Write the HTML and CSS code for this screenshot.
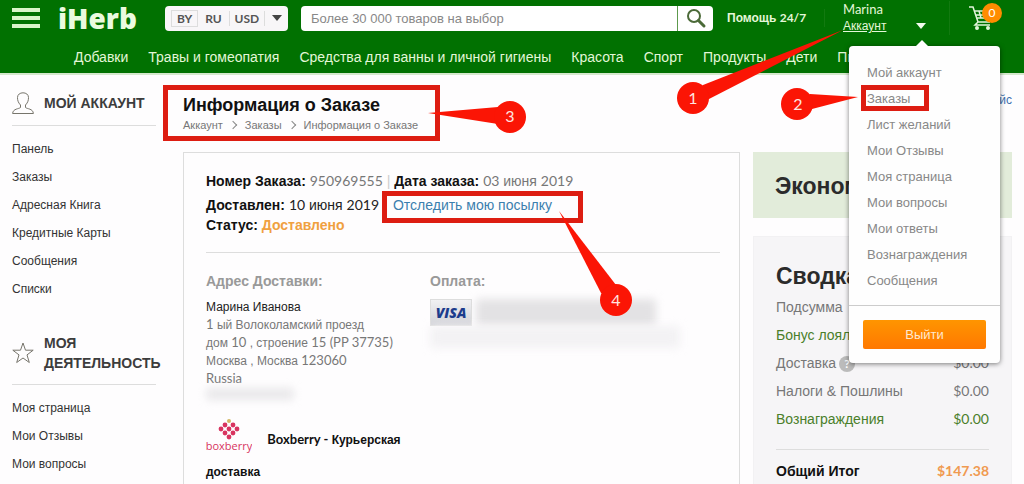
FILE: index.html
```html
<!DOCTYPE html>
<html lang="ru">
<head>
    <meta charset="UTF-8">
    <meta name="viewport" content="width=device-width, initial-scale=1.0">
    <title>Информация о Заказе</title>
    <link rel="stylesheet" href="styles.css">
</head>
<body>

    <header class="header">
        <div class="topbar">
            <button class="burger" aria-label="Меню"><span></span><span></span><span></span></button>
            <a class="logo" href="#">iHerb</a>
            <button class="locale">
                <span class="country">BY</span>
                <span class="lang">RU</span>
                <span class="currency">USD</span>
                <span class="caret"></span>
            </button>
            <form class="search">
                <input type="text" aria-label="Поиск" placeholder="Более 30 000 товаров на выбор">
                <button type="button" aria-label="Найти">
                    <svg width="22" height="22" viewBox="0 0 22 22" fill="none" stroke="#4b6a38">
                        <circle cx="9" cy="9" r="6" stroke-width="2"/>
                        <path d="M13.5 13.5L19 19" stroke-width="3" stroke-linecap="round"/>
                    </svg>
                </button>
            </form>
            <a class="help" href="#">Помощь <span class="lat">24/7</span></a>
            <div class="account">
                <div class="account-name">
                    <span class="lat">Marina</span>
                    <a href="#">Аккаунт</a>
                </div>
                <span class="caret light"></span>
            </div>
            <a class="cart" href="#" aria-label="Корзина">
                <svg width="24" height="26" viewBox="0 0 24 26" fill="none" stroke="#e4f5dc" stroke-width="2">
                    <path d="M0 2h4l5 15h12M5 6h16l-3 7H8M10 6l2 7M15 6v7M6 10h13M9 17l-3 3h15" stroke-width="1.5"/>
                    <circle cx="8" cy="23" r="1"/>
                    <circle cx="19" cy="23" r="1"/>
                </svg>
                <span class="badge">0</span>
            </a>
        </div>
        <nav class="nav">
            <a href="#">Добавки</a>
            <a href="#">Травы и гомеопатия</a>
            <a href="#">Средства для ванны и личной гигиены</a>
            <a href="#">Красота</a>
            <a href="#">Спорт</a>
            <a href="#">Продукты</a>
            <a href="#">Дети</a>
            <a href="#">Питомцы</a>
        </nav>
    </header>

    <div class="page">
        <aside class="sidebar">
            <h2>
                <svg width="22" height="22" viewBox="0 0 22 22" fill="none" stroke="#77756c">
                    <path d="M8.500 13C6 10.500 5.500 8 5.500 5.500C5.500 2.500 8 .8 11 .8s5.500 1.700 5.500 4.700c0 2.500-.5 5-3 7.500v2.500c1.500 1.500 7.500 1 7.900 6H.6c.4-5 6.400-4.500 7.900-6z"/>
                </svg>
                <span>МОЙ АККАУНТ</span>
            </h2>
            <ul>
                <li><a href="#">Панель</a></li>
                <li><a href="#">Заказы</a></li>
                <li><a href="#">Адресная Книга</a></li>
                <li><a href="#">Кредитные Карты</a></li>
                <li><a href="#">Сообщения</a></li>
                <li><a href="#">Списки</a></li>
            </ul>
            <h2>
                <svg width="22" height="22" viewBox="0 0 22 22" fill="none" stroke="#77756c">
                    <path d="M11 1l2.500 7.200h7.700l-6.200 4.700 2.300 7.600L11 16l-6.300 4.500L7 12.900.8 8.200h7.700z"/>
                </svg>
                <span>МОЯ ДЕЯТЕЛЬНОСТЬ</span>
            </h2>
            <ul>
                <li><a href="#">Моя страница</a></li>
                <li><a href="#">Мои Отзывы</a></li>
                <li><a href="#">Мои вопросы</a></li>
            </ul>
        </aside>

        <main class="content">
            <h1>Информация о Заказе</h1>
            <div class="crumbs">
                <a href="#">Аккаунт</a><i></i><a href="#">Заказы</a><i></i><span>Информация о Заказе</span>
            </div>

            <section class="order">
                <div class="order-head">
                    <p class="first"><b>Номер Заказа:</b> <span class="lat muted">950969555</span> <span class="bar">|</span> <b>Дата заказа:</b> <span class="muted"><span class="lat">03</span> июня <span class="lat">2019</span></span></p>
                    <p><b>Доставлен:</b> <span class="lat">10</span> июня <span class="lat">2019</span> <a class="track" href="#">Отследить мою посылку</a></p>
                    <p><b>Статус:</b> <b class="status">Доставлено</b></p>
                </div>
                <div class="details">
                    <div class="address">
                        <h3>Адрес Доставки:</h3>
                        <p>
                            <span class="name">Марина Иванова</span><br>
                            <span class="lat">1</span> ый Волоколамский проезд<br>
                            дом <span class="lat">10</span> , строение <span class="lat">15 (PP 37735)</span><br>
                            Москва , Москва <span class="lat">123060</span><br>
                            <span class="lat">Russia</span>
                        </p>
                        <div class="smudge phone"></div>
                    </div>
                    <div class="payment">
                        <h3>Оплата:</h3>
                        <div class="card-row">
                            <span class="visa">VISA</span>
                            <div class="smudge dark"></div>
                        </div>
                        <div class="smudge"></div>
                    </div>
                </div>
                <p class="shipping">
                    <svg class="boxberry" width="46" height="36" viewBox="0 0 46 36" fill="#d8345f">
                        <circle cx="23" cy="3" r="2" fill="#d3b765"/>
                        <circle cx="19" cy="7" r="2.400"/><circle cx="27" cy="7" r="2.400"/>
                        <circle cx="15" cy="11" r="2.400"/><circle cx="23" cy="11" r="2.400"/><circle cx="31" cy="11" r="2.400"/>
                        <circle cx="19" cy="15" r="2.400"/><circle cx="27" cy="15" r="2.400"/>
                        <circle cx="23" cy="19" r="2.400"/>
                        <text x="23" y="32" text-anchor="middle">boxberry</text>
                    </svg>
                    <span class="lat">Boxberry -</span> Курьерская доставка
                </p>
            </section>
        </main>

        <aside class="summary">
            <a class="price" href="#">Прайс</a>
            <div class="saving">Экономия</div>
            <div class="totals">
                <h2>Сводка заказа</h2>
                <table>
                    <tr><th>Подсумма</th><td></td></tr>
                    <tr class="green"><th>Бонус лояльности</th><td></td></tr>
                    <tr><th>Доставка<span class="hint">?</span></th><td>$0.00</td></tr>
                    <tr><th>Налоги &amp; Пошлины</th><td>$0.00</td></tr>
                    <tr class="green"><th>Вознаграждения</th><td>$0.00</td></tr>
                </table>
                <div class="grand"><span>Общий Итог</span><span class="sum">$147.38</span></div>
            </div>
        </aside>
    </div>

    <!-- Account drop-down -->
    <div class="menu">
        <ul>
            <li><a href="#">Мой аккаунт</a></li>
            <li><a href="#">Заказы</a></li>
            <li><a href="#">Лист желаний</a></li>
            <li><a href="#">Мои Отзывы</a></li>
            <li><a href="#">Моя страница</a></li>
            <li><a href="#">Мои вопросы</a></li>
            <li><a href="#">Мои ответы</a></li>
            <li><a href="#">Вознаграждения</a></li>
            <li><a href="#">Сообщения</a></li>
        </ul>
        <div class="menu-foot">
            <button>Выйти</button>
        </div>
    </div>

    <!-- Step marks drawn over the page -->
    <svg class="marks" width="1024" height="484" viewBox="0 0 1024 484">
        <g fill="none" stroke="#dd1d12" stroke-width="5">
            <rect x="165.500" y="87.500" width="272" height="51"/>
            <rect x="384.500" y="193.500" width="196" height="27"/>
            <rect x="863.500" y="87.500" width="63" height="21"/>
        </g>
        <g fill="#fb1505">
            <path d="M843 30L703 85 693 98 709 99z"/>
            <circle cx="693" cy="98" r="16"/>
            <path d="M858 97L810 94 797 104 812 109z"/>
            <circle cx="797" cy="104" r="16"/>
            <path d="M428 113L498 107 510 117 498 124z"/>
            <circle cx="510" cy="117" r="16"/>
            <path d="M559 211L601 293 616 300 616 285z"/>
            <circle cx="616" cy="300" r="16"/>
        </g>
        <g class="mark-num">
            <text x="693" y="104">1</text>
            <text x="798" y="110">2</text>
            <text x="510" y="122">3</text>
            <text x="616" y="306">4</text>
        </g>
    </svg>

</body>
</html>
```
FILE: styles.css
```css
* {
    box-sizing: border-box;
}
body {
    margin: 0;
    height: 100vh;
    overflow: hidden;
    position: relative;
    background: #fefdfe;
    color: #333;
    font: 13px/18px "Liberation Sans", Arial, sans-serif;
}
a {
    color: inherit;
    text-decoration: none;
}
button {
    border: none;
    padding: 0;
    cursor: pointer;
}
h1, h2, h3, p, ul {
    margin: 0;
    padding: 0;
}
ul {
    list-style: none;
}
.lat {
    font-family: Lato, sans-serif;
}
.muted {
    color: #777;
}

/* Header */
.header {
    background: #017101;
    border-bottom: 2px solid #d5e8cd;
    color: #e4f7d8;
}
.topbar {
    display: flex;
    align-items: center;
    height: 36px;
    padding: 0 12px;
}
.burger {
    display: flex;
    flex-direction: column;
    gap: 4px;
    width: 28px;
    background: none;
}
.burger span {
    height: 4px;
    background: #d9f5c9;
}
.logo {
    width: 84px;
    margin-left: 18px;
    font: 800 28px/34px "Open Sans", sans-serif;
    color: #eafbdf;
}
.locale {
    display: flex;
    align-items: center;
    justify-content: space-between;
    width: 123px;
    height: 25px;
    margin-left: 23px;
    padding: 0 6px;
    border-radius: 4px;
    background: #f8f6f8;
    color: #555;
    font: bold 12px/15px Lato, sans-serif;
}
.country {
    padding: 0 5px;
    border: 1px solid #ddd;
}
.currency {
    padding: 0 5px;
    border: solid #ddd;
    border-width: 0 1px;
}
.caret {
    border: 5px solid transparent;
    border-top: 6px solid #444;
    border-bottom: none;
}
.caret.light {
    border-top-color: #f2fbee;
}
.search {
    display: flex;
    flex: 1;
    height: 25px;
    margin-left: 13px;
}
.search input {
    flex: 1;
    min-width: 0;
    border: none;
    border-radius: 4px 0 0 4px;
    padding: 0 10px;
    background: #fff;
    font: 13px "Liberation Sans", Arial, sans-serif;
}
.search input::placeholder {
    color: #888;
}
.search button {
    display: flex;
    align-items: center;
    justify-content: center;
    width: 36px;
    border-left: 1px solid #5d9a4d;
    border-radius: 0 4px 4px 0;
    background: #fff;
}
.help {
    width: 98px;
    margin-left: 14px;
    border-right: 1px solid #127a10;
    font-weight: bold;
    font-size: 12px;
}
.account {
    display: flex;
    align-items: flex-end;
    justify-content: space-between;
    width: 125px;
    padding: 0 23px 0 18px;
    border-right: 1px solid #127a10;
    line-height: 17px;
}
.account-name {
    display: flex;
    flex-direction: column;
}
.account-name a {
    font-size: 12px;
    text-decoration: underline;
}
.account .caret {
    margin-bottom: 6px;
}
.cart {
    position: relative;
    width: 43px;
    height: 26px;
    margin-left: 19px;
}
.badge {
    position: absolute;
    top: -2px;
    left: 13px;
    width: 20px;
    height: 20px;
    border-radius: 50%;
    background: #ff8c00;
    color: #fff;
    font: 12px/20px Lato, sans-serif;
    text-align: center;
}
.nav {
    display: flex;
    gap: 20px;
    padding: 12px 0 7px 74px;
    overflow: hidden;
    white-space: nowrap;
    font-size: 14px;
}

/* Columns */
.page {
    display: grid;
    grid-template-columns: 144px 1fr 259px;
    padding: 0 12px;
}
.content {
    padding: 19px 13px 0 27px;
}

/* Left menu */
.sidebar {
    padding-top: 17px;
    font-size: 12px;
}
.sidebar h2 {
    display: flex;
    align-items: center;
    gap: 10px;
    padding-bottom: 11px;
    border-bottom: 1px solid #ddd;
    font-size: 14px;
    line-height: 20px;
    color: #3c3c3c;
}
.sidebar h2 svg {
    flex: none;
}
.sidebar ul {
    padding: 9px 0 30px;
}
.sidebar li {
    line-height: 28px;
}

/* Order */
h1 {
    font-size: 18px;
    line-height: 22px;
    color: #111;
}
.crumbs {
    display: flex;
    align-items: center;
    font-size: 11px;
    color: #777;
}
.crumbs i {
    width: 6px;
    height: 6px;
    margin: 0 9px 0 7px;
    border: solid #888;
    border-width: 1px 1px 0 0;
    transform: rotate(45deg);
}
.order {
    margin-top: 18px;
    padding: 18px 19px 60px 22px;
    border: 1px solid #ddd;
    font-size: 14px;
}
.order-head {
    padding-bottom: 17px;
    border-bottom: 1px solid #ddd;
    color: #222;
    line-height: 20px;
}
.order-head .first {
    margin-bottom: 4px;
}
.order-head b {
    color: #111;
}
.bar {
    color: #ccc;
}
.order-head .track {
    margin-left: 10px;
    color: #3b7fae;
}
.order-head .status {
    color: #f0a040;
}
.details {
    display: grid;
    grid-template-columns: 224px 1fr;
    padding-top: 18px;
}
h3 {
    margin-bottom: 8px;
    font-size: 14px;
    line-height: 20px;
    color: #999;
}
.address p {
    color: #777;
    font-size: 12px;
    line-height: 17px;
}
.address .lat {
    font-size: 13px;
}
.address .name {
    color: #222;
}
.smudge {
    width: 250px;
    height: 22px;
    border-radius: 4px;
    background: #f3f2f4;
    filter: blur(4px);
}
.smudge.dark {
    width: 180px;
    height: 27px;
    background: #e3e2e4;
}
.smudge.phone {
    width: 88px;
    height: 12px;
    background: #e9e8ea;
}
.card-row {
    display: flex;
    align-items: flex-start;
    gap: 4px;
}
.visa {
    width: 42px;
    border: 1px solid #ddd;
    background: linear-gradient(#f1f1f3, #d2d3d8);
    color: #1c3c8c;
    font: italic 800 14px/25px "Open Sans", sans-serif;
    text-align: center;
}
.shipping {
    width: 230px;
    margin-top: 18px;
    color: #111;
    font-size: 12px;
    font-weight: bold;
    line-height: 32px;
}
.shipping .lat {
    font-size: 13px;
}
.boxberry {
    margin-right: 12px;
    vertical-align: -10px;
}
.boxberry text {
    font: 11px "Open Sans", sans-serif;
}

/* Right column */
.price {
    display: block;
    padding: 16px 0 43px;
    color: #3b70ae;
    font-size: 12px;
    text-align: right;
}
.saving {
    padding: 22px 22px 20px;
    background: #e2ecda;
    color: #2b2b2b;
    font-size: 23px;
    font-weight: bold;
    line-height: 24px;
}
.totals {
    margin-top: 18px;
    padding: 27px 22px 40px;
    border: 1px solid #f2f1f3;
    background: #f6f5f7;
}
.totals h2 {
    margin-bottom: 5px;
    font-size: 23px;
    line-height: 24px;
    color: #2b2b2b;
}
.totals table {
    width: 100%;
    border-collapse: collapse;
    color: #777;
    font-size: 14px;
    white-space: nowrap;
}
.totals th, .totals td {
    height: 28px;
    padding: 4px 0;
    font-weight: normal;
    text-align: left;
}
.totals td {
    font-family: Lato, sans-serif;
    text-align: right;
}
.totals .green {
    color: #4a7f2a;
}
.hint {
    display: inline-block;
    width: 16px;
    margin-left: 3px;
    border-radius: 50%;
    background: #bbb;
    color: #fff;
    font: bold 12px/16px Lato, sans-serif;
    text-align: center;
}
.grand {
    display: flex;
    justify-content: space-between;
    margin-top: 16px;
    padding-top: 12px;
    border-top: 1px solid #ddd;
    color: #111;
    font-size: 14px;
    font-weight: bold;
}
.grand .sum {
    color: #f09a50;
    font-family: Lato, sans-serif;
}

/* Account menu */
.menu {
    position: absolute;
    top: 46px;
    right: 24px;
    width: 151px;
    border-radius: 4px;
    background: #fefefe;
    box-shadow: 0 1px 5px rgba(0, 0, 0, 0.5);
    color: #888;
}
.menu::before {
    content: "";
    position: absolute;
    top: -6px;
    left: 67px;
    border: 6px solid transparent;
    border-top: none;
    border-bottom-color: #fefefe;
}
.menu ul {
    padding: 14px 18px 11px;
}
.menu li {
    line-height: 26px;
}
.menu-foot {
    padding: 14px;
    border-top: 1px solid #ccc;
}
.menu-foot button {
    display: block;
    width: 100%;
    border-radius: 2px;
    background: linear-gradient(#ff9500, #ff7800);
    color: #ffe9cf;
    font: 13px/29px "Liberation Sans", Arial, sans-serif;
}

/* Numbered callouts */
.marks {
    position: absolute;
    top: 0;
    left: 0;
    pointer-events: none;
}
.mark-num {
    fill: #ffe5e0;
    font: 16px Lato, sans-serif;
    text-anchor: middle;
}
```
